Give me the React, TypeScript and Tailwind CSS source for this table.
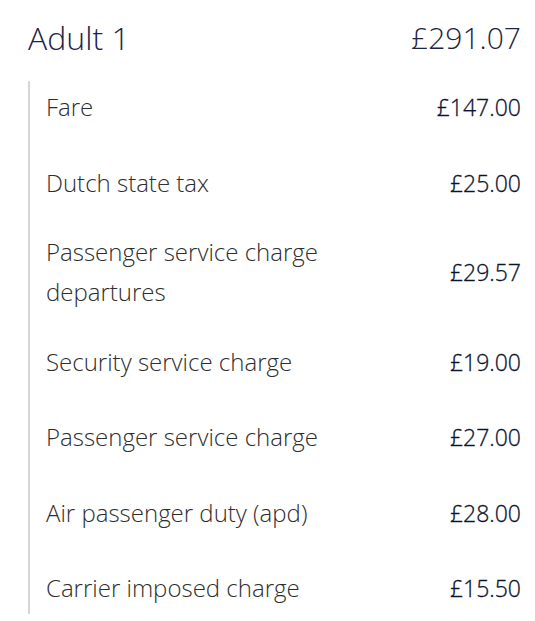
import React from 'react';

const items: { label: string; amount: string }[] = [
  { label: 'Fare', amount: '£147.00' },
  { label: 'Dutch state tax', amount: '£25.00' },
  { label: 'Passenger service charge departures', amount: '£29.57' },
  { label: 'Security service charge', amount: '£19.00' },
  { label: 'Passenger service charge', amount: '£27.00' },
  { label: 'Air passenger duty (apd)', amount: '£28.00' },
  { label: 'Carrier imposed charge', amount: '£15.50' },
];

export default function App() {
  return (
    <div className="min-h-screen bg-white pl-[28px] pr-[14px] pt-[14px] font-['Open_Sans',sans-serif]">
      <div className="flex items-center justify-between h-[48px]">
        <h1 className="text-[32px] font-light text-[#1b2444] leading-[48px]">Adult 1</h1>
        <span className="text-[30px] font-light text-[#1b2444] leading-[48px]">£291.07</span>
      </div>
      <div className="mt-[19px] border-l-2 border-[#d6d6d6] pl-[16px] flex flex-col gap-[23.5px]">
        {items.map((item) => (
          <div key={item.label} className="flex items-center justify-between min-h-[52px]">
            <span className="text-[24px] font-light leading-[40px] text-[#2e2e2e] max-w-[300px]">
              {item.label}
            </span>
            <span className="text-[23px] font-light text-[#0c1330] leading-[40px] [-webkit-text-stroke:0.3px_#0c1330]">
              {item.amount}
            </span>
          </div>
        ))}
      </div>
    </div>
  );
}
